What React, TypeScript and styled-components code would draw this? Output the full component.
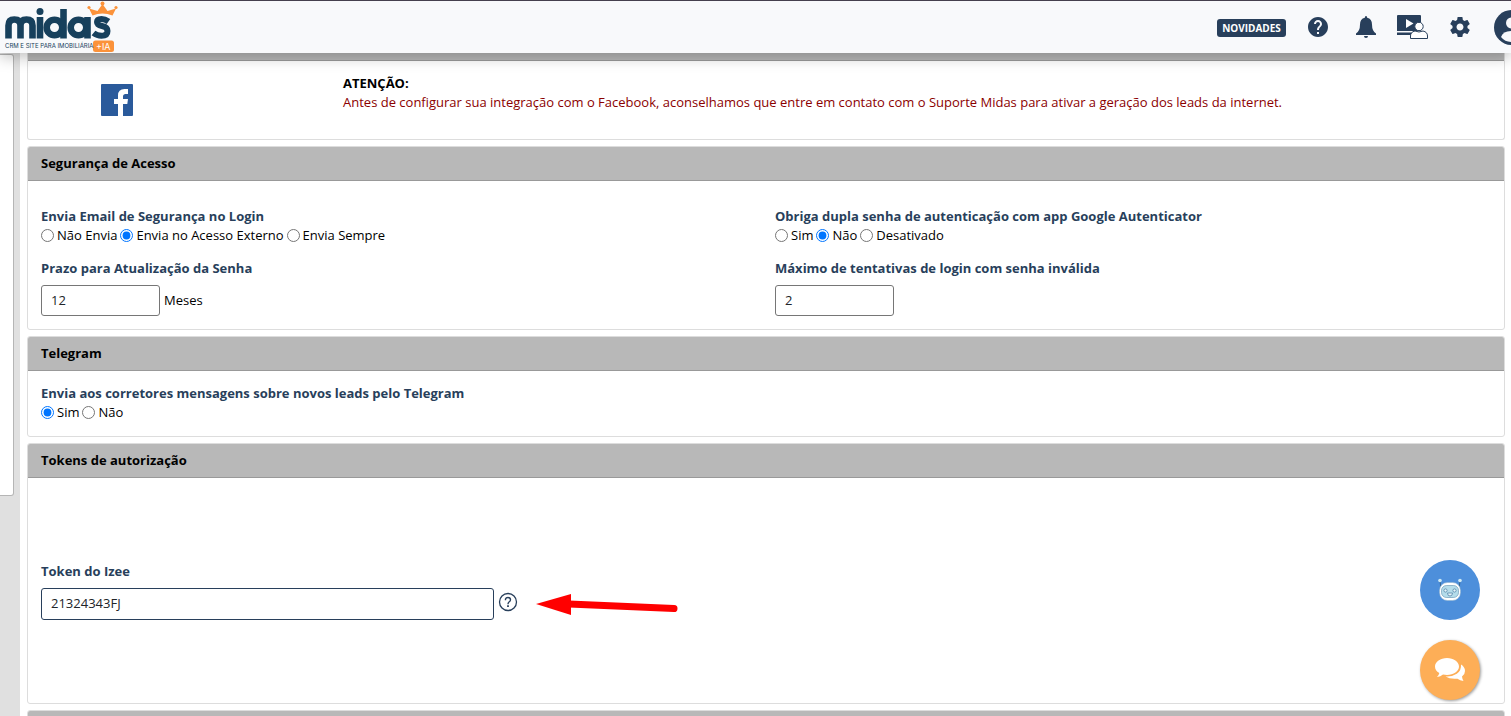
import React from "react";
import styled, { createGlobalStyle } from "styled-components";

const NAVY = "#283f5b";

const GlobalStyle = createGlobalStyle`
  *, *::before, *::after { box-sizing: border-box; }
  html, body { margin: 0; padding: 0; }
  body, input, button {
    font-family: "Open Sans", "Noto Sans", sans-serif;
    font-size: 13px;
    line-height: 20px;
    color: #000;
  }
`;

const Shell = styled.div`
  height: 100vh;
  display: flex;
  flex-direction: column;
  overflow: hidden;
  background: #fff;
`;

const TopBar = styled.header`
  position: relative;
  z-index: 2;
  flex: none;
  height: 53px;
  display: flex;
  align-items: center;
  justify-content: space-between;
  background: #f8f9fb;
  border-top: 1px solid #45404e;
  box-shadow: 0 4px 14px rgba(0, 0, 0, 0.25);
`;

const LogoLink = styled.a`
  display: block;
  align-self: flex-start;
  height: 52px;
`;

const Actions = styled.nav`
  display: flex;
  align-items: center;
  overflow: hidden;
  height: 52px;
`;

const NewsButton = styled.button`
  height: 18px;
  width: 69px;
  margin: 2px 22px 0 0;
  padding: 0;
  border: 0;
  border-radius: 3px;
  background: ${NAVY};
  color: #fff;
  font-size: 10px;
  line-height: 18px;
  font-weight: 700;
`;

const IconButton = styled.button<{ $width: number; $gap: number }>`
  flex: none;
  width: ${(p) => p.$width}px;
  height: 36px;
  margin-right: ${(p) => p.$gap}px;
  padding: 0;
  border: 0;
  background: none;
  display: flex;
  align-items: center;
  justify-content: flex-start;
  svg { display: block; flex: none; }
`;

const ProfileButton = styled(IconButton)`
  overflow: hidden;
`;

const Columns = styled.div`
  flex: 1;
  min-height: 0;
  display: flex;
`;

const Side = styled.aside`
  flex: none;
  width: 20px;
  padding-top: 1px;
  background: #e0e0e0;
`;

const SidePanel = styled.div`
  width: 14px;
  height: 442px;
  background: #fff;
  border: 1px solid #b5b5b5;
  border-left: 0;
  border-radius: 0 3px 3px 0;
`;

const Main = styled.main`
  flex: 1;
  min-width: 0;
  padding: 0 6px 0 7px;
  display: flex;
  flex-direction: column;
  gap: 6px;
  overflow: hidden;
`;

const Card = styled.section<{ $continued?: boolean }>`
  flex: none;
  border: 1px solid #ddd;
  border-top-width: ${(p) => (p.$continued ? 0 : 1)}px;
  border-radius: ${(p) => (p.$continued ? "0 0 3px 3px" : "3px")};
  overflow: hidden;
`;

const CardTitle = styled.h2`
  margin: 0;
  height: 34px;
  padding: 6px 13px;
  background: #b8b8b8;
  border-bottom: 1px solid #999;
  font-size: 13px;
  line-height: 20px;
  font-weight: 700;
`;

const TitleStrip = styled.div`
  height: 8px;
  background: #b8b8b8;
  border-bottom: 1px solid #999;
`;

const CardBody = styled.div<{ $top: number; $bottom: number }>`
  padding: ${(p) => p.$top}px 13px ${(p) => p.$bottom}px;
`;

const Notice = styled.div`
  display: flex;
  height: 78px;
  padding: 13px 13px 0;
`;

const NoticeLogo = styled.div`
  width: 302px;
  padding: 10px 60px;
  svg { display: block; }
`;

const NoticeText = styled.p`
  margin: 0;
  line-height: 19px;
  color: #8b0000;
  strong { display: block; color: #000; }
`;

const FieldGrid = styled.div`
  display: grid;
  grid-template-columns: 1fr 1fr;
  gap: 13px 18px;
`;

const RadioSet = styled.fieldset`
  margin: 0;
  padding: 0;
  border: 0;
  min-width: 0;
`;

const Legend = styled.legend`
  padding: 0;
  color: ${NAVY};
  font-weight: 700;
`;

const Options = styled.div`
  display: flex;
  gap: 3px;
  line-height: 19px;
`;

const Option = styled.label`
  display: flex;
  align-items: center;
  gap: 3px;
  input { width: 13px; height: 13px; margin: 0; }
`;

const FieldLabel = styled.label`
  display: block;
  margin-bottom: 7px;
  color: ${NAVY};
  font-weight: 700;
`;

const FieldRow = styled.div`
  display: flex;
  align-items: center;
  gap: 4px;
`;

const Unit = styled.span`
  line-height: 19px;
`;

const TextInput = styled.input<{ $wide?: boolean }>`
  flex: 0 1 ${(p) => (p.$wide ? 453 : 119)}px;
  min-width: 0;
  width: ${(p) => (p.$wide ? 453 : 119)}px;
  height: ${(p) => (p.$wide ? 32 : 31)}px;
  padding: 0 9px 2px;
  border: 1px solid ${(p) => (p.$wide ? NAVY : "#767676")};
  border-radius: 3px;
  background: #fff;
  color: #212529;
  outline: 0;
`;

const HelpButton = styled.button`
  flex: none;
  height: 24px;
  padding: 0 0 4px;
  border: 0;
  background: none;
  svg { display: block; }
`;

const Pointer = styled.svg`
  flex: none;
  margin-left: 14px;
`;

const Floating = styled.div`
  position: fixed;
  right: 31px;
  bottom: 16px;
  z-index: 3;
  display: grid;
  gap: 20px;
`;

const RoundButton = styled.button<{ $color: string; $raised?: boolean }>`
  width: 60px;
  height: 60px;
  padding: 0;
  border: 0;
  border-radius: 50%;
  background: ${(p) => p.$color};
  box-shadow: ${(p) => (p.$raised ? "1px 1px 3px rgba(0, 0, 0, 0.4)" : "none")};
  svg { display: block; margin: 0 auto; }
`;

const Logo = () => (
  <svg width="120" height="52" viewBox="0 1 120 52" role="img" aria-label="midas">
    <g fill="none" stroke="#17405c" strokeWidth="6.600">
      <path d="M8.500 38.500V25.500Q8.500 19.500 14.300 19.500Q20.500 19.500 20.500 25.500V38.500M20.500 25.500Q20.500 19.500 26.500 19.500Q32.500 19.500 32.500 25.500V38.500" />
      <path d="M40 17V38.500" />
      <circle cx="54.500" cy="27.500" r="7.800" />
      <path d="M63.500 9V38.500" />
      <circle cx="78.500" cy="27.500" r="7.800" />
      <path d="M87.500 17V38.500" />
      <path d="M108.500 21.500Q105 19 101.500 19Q97 19 97 22Q97 25 102 26Q107.500 27 107.500 31Q107.500 35.800 101.500 35.800Q97 35.800 93.500 33" strokeWidth="6" />
    </g>
    <circle cx="40" cy="11.500" r="3.500" fill="#17405c" />
    <path d="M92.500 15.500L89 8.500L97.500 11L102.500 4L107.500 11L116 8.500L112.500 15.500Q102.500 11.500 92.500 15.500Z" fill="#fb923a" />
    <g fill="#fb923a">
      <circle cx="89" cy="7.500" r="1.600" />
      <circle cx="102.500" cy="3.500" r="2" />
      <circle cx="116" cy="7.500" r="1.600" />
    </g>
    <rect x="93" y="40.500" width="21" height="11.500" rx="2.500" fill="#fb923a" />
    <text x="96" y="50" fontFamily="Inter, sans-serif" fontSize="9" fill="#fff">+IA</text>
    <text x="5" y="48" fontFamily="Inter, sans-serif" fontSize="6" fill="#17405c">CRM E SITE PARA IMOBILIÁRIA</text>
  </svg>
);

const FacebookLogo = () => (
  <svg width="32" height="32" viewBox="0 0 32 32" role="img" aria-label="Facebook">
    <rect width="32" height="32" rx="1" fill="#2a5a9b" />
    <path d="M17 32V20H13V15H17V11.500Q17 5 23.500 5H27V10H24.500Q22 10 22 12.500V15H27L26.300 20H22V32Z" fill="#fff" />
  </svg>
);

type RadioGroupProps = { name: string; legend: string; options: string[]; selected: string };

const RadioGroup = ({ name, legend, options, selected }: RadioGroupProps) => (
  <RadioSet>
    <Legend>{legend}</Legend>
    <Options>
      {options.map((o) => (
        <Option key={o}>
          <input type="radio" name={name} defaultChecked={o === selected} />
          {o}
        </Option>
      ))}
    </Options>
  </RadioSet>
);

export default function App() {
  return (
    <>
      <GlobalStyle />
      <Shell>
        <TopBar>
          <LogoLink href="#"><Logo /></LogoLink>
          <Actions>
            <NewsButton type="button">NOVIDADES</NewsButton>
            <IconButton type="button" aria-label="Ajuda" $width={20} $gap={28}>
              <svg width="20" height="20" viewBox="2 2 20 20" fill={NAVY}>
                <path d="M12 2C6.480 2 2 6.480 2 12s4.480 10 10 10 10-4.480 10-10S17.520 2 12 2zm1 17h-2v-2h2v2zm2.070-7.750l-.9.920C13.450 12.900 13 13.500 13 15h-2v-.5c0-1.100.450-2.100 1.170-2.830l1.240-1.260c.370-.360.590-.860.590-1.410 0-1.100-.9-2-2-2s-2 .9-2 2H8c0-2.210 1.790-4 4-4s4 1.790 4 4c0 .880-.360 1.680-.930 2.250z" />
              </svg>
            </IconButton>
            <IconButton type="button" aria-label="Notificações" $width={20} $gap={21}>
              <svg width="20" height="22" viewBox="0 0 20 22" fill={NAVY}>
                <path d="M10 0Q11.200 0 11.200 1.800Q16 3 16 8.500Q16 15 20 17.500V19H0V17.500Q4 15 4 8.500Q4 3 8.800 1.800Q8.800 0 10 0ZM8 20H12Q12 22 10 22Q8 22 8 20Z" />
              </svg>
            </IconButton>
            <IconButton type="button" aria-label="Treinamentos" $width={31} $gap={22}>
              <svg width="31" height="25" viewBox="0 0 31 25">
                <path d="M1 0H23Q24 0 24 1V16H0V1Q0 0 1 0ZM0 17.500H15V20H0Z" fill={NAVY} />
                <path d="M9 4L16.500 8.500L9 13Z" fill="#fff" />
                <g fill="#fff" stroke={NAVY}>
                  <circle cx="22" cy="11.500" r="4.200" />
                  <path d="M13.500 23.500V21Q13.500 17 18 16Q22 18 26 16Q30.500 17 30.500 21V23.500Z" />
                </g>
              </svg>
            </IconButton>
            <IconButton type="button" aria-label="Configurações" $width={20} $gap={24}>
              <svg width="20" height="20" viewBox="2 2 20 20" fill={NAVY}>
                <path d="M19.430 12.980c.040-.320.070-.640.070-.980s-.030-.660-.070-.980l2.110-1.650c.190-.150.240-.420.120-.640l-2-3.460c-.120-.220-.390-.3-.610-.220l-2.490 1c-.520-.4-1.080-.730-1.690-.980l-.380-2.650C14.460 2.180 14.250 2 14 2h-4c-.250 0-.460.180-.490.420l-.380 2.650c-.610.250-1.170.590-1.690.980l-2.490-1c-.230-.090-.490 0-.610.220l-2 3.460c-.130.220-.070.490.120.640l2.110 1.650c-.040.320-.070.650-.070.980s.030.660.070.980l-2.110 1.650c-.190.150-.240.420-.120.640l2 3.460c.120.220.390.3.610.220l2.490-1c.520.4 1.080.730 1.690.980l.380 2.650c.030.240.240.420.490.420h4c.250 0 .460-.180.490-.420l.380-2.650c.610-.250 1.170-.590 1.690-.980l2.490 1c.230.090.490 0 .610-.220l2-3.460c.120-.220.070-.490-.120-.640l-2.110-1.650zM12 15.500c-1.930 0-3.500-1.570-3.500-3.500s1.570-3.500 3.500-3.500 3.500 1.570 3.500 3.500-1.570 3.500-3.500 3.500z" />
              </svg>
            </IconButton>
            <ProfileButton type="button" aria-label="Perfil" $width={17} $gap={0}>
              <svg width="35" height="35" viewBox="0 0 35 35">
                <circle cx="17.500" cy="17.500" r="17.500" fill={NAVY} />
                <circle cx="17.500" cy="13" r="5.500" fill="#f8f9fb" />
                <path d="M7 27Q9 21 17.500 21Q26 21 28 27Q24 32 17.500 32Q11 32 7 27Z" fill="#f8f9fb" />
              </svg>
            </ProfileButton>
          </Actions>
        </TopBar>

        <Columns>
          <Side><SidePanel /></Side>
          <Main>
            <Card $continued>
              <TitleStrip />
              <Notice>
                <NoticeLogo><FacebookLogo /></NoticeLogo>
                <NoticeText>
                  <strong>ATENÇÃO:</strong>
                  Antes de configurar sua integração com o Facebook, aconselhamos que entre em contato com o Suporte Midas para ativar a geração dos leads da internet.
                </NoticeText>
              </Notice>
            </Card>

            <Card>
              <CardTitle>Segurança de Acesso</CardTitle>
              <CardBody $top={25} $bottom={13}>
                <FieldGrid>
                  <RadioGroup
                    name="email"
                    legend="Envia Email de Segurança no Login"
                    options={["Não Envia", "Envia no Acesso Externo", "Envia Sempre"]}
                    selected="Envia no Acesso Externo"
                  />
                  <RadioGroup
                    name="dupla"
                    legend="Obriga dupla senha de autenticação com app Google Autenticator"
                    options={["Sim", "Não", "Desativado"]}
                    selected="Não"
                  />
                  <div>
                    <FieldLabel htmlFor="prazo">Prazo para Atualização da Senha</FieldLabel>
                    <FieldRow>
                      <TextInput id="prazo" defaultValue="12" />
                      <Unit>Meses</Unit>
                    </FieldRow>
                  </div>
                  <div>
                    <FieldLabel htmlFor="maximo">Máximo de tentativas de login com senha inválida</FieldLabel>
                    <FieldRow>
                      <TextInput id="maximo" defaultValue="2" />
                    </FieldRow>
                  </div>
                </FieldGrid>
              </CardBody>
            </Card>

            <Card>
              <CardTitle>Telegram</CardTitle>
              <CardBody $top={12} $bottom={14}>
                <RadioGroup
                  name="telegram"
                  legend="Envia aos corretores mensagens sobre novos leads pelo Telegram"
                  options={["Sim", "Não"]}
                  selected="Sim"
                />
              </CardBody>
            </Card>

            <Card>
              <CardTitle>Tokens de autorização</CardTitle>
              <CardBody $top={83} $bottom={83}>
                <FieldLabel htmlFor="token">Token do Izee</FieldLabel>
                <FieldRow>
                  <TextInput id="token" $wide defaultValue="21324343FJ" />
                  <HelpButton type="button" aria-label="Ajuda sobre o token">
                    <svg width="20" height="20" viewBox="0 0 20 20" fill="none" stroke={NAVY}>
                      <circle cx="10" cy="10" r="8.500" strokeWidth="1.300" />
                      <path d="M7.500 8.200V7Q8 5.500 10 5.500Q12.500 5.500 12.500 7.700Q12.500 9 11 10Q10 10.700 10 12.200" strokeWidth="1.400" />
                      <path d="M10 13.300V15" strokeWidth="1.800" />
                    </svg>
                  </HelpButton>
                  <Pointer width="142" height="22" viewBox="0 0 142 22" aria-hidden="true">
                    <path d="M33 11L138 15.500" stroke="#f00" strokeWidth="7" strokeLinecap="round" />
                    <path d="M0 11L35 1V22Z" fill="#f00" />
                  </Pointer>
                </FieldRow>
              </CardBody>
            </Card>

            <Card>
              <TitleStrip />
            </Card>
          </Main>
        </Columns>

        <Floating>
          <RoundButton type="button" aria-label="Assistente virtual" $color="#4d8fdb">
            <svg width="26" height="24" viewBox="0 0 26 24">
              <path d="M3 3L4 11M23 3L22 11" stroke="#37648f" strokeWidth="1" />
              <circle cx="3" cy="2.500" r="1.800" fill="#cfeaf5" />
              <circle cx="23" cy="2.500" r="1.800" fill="#cfeaf5" />
              <rect x="2.500" y="4.500" width="21" height="18" rx="8" fill="#fff" stroke="#8fb4d0" strokeWidth="0.600" />
              <rect x="4.500" y="7.500" width="17" height="12" rx="5" fill="#b4dcea" stroke="#5d8fae" strokeWidth="0.600" />
              <g fill="none" stroke="#5585a8" strokeWidth="0.800">
                <circle cx="8.500" cy="12.500" r="1.600" fill="#e8f6fb" />
                <circle cx="17.500" cy="12.500" r="1.600" fill="#e8f6fb" />
                <path d="M10.500 15H15.500Q15.500 18 13 18Q10.500 18 10.500 15Z" fill="#e8f6fb" />
              </g>
            </svg>
          </RoundButton>
          <RoundButton type="button" aria-label="Conversas" $color="#fdae57" $raised>
            <svg width="30" height="24" viewBox="0 0 30 24" fill="#fff">
              <path d="M12 0C18.500 0 24 3.700 24 8.500S18.500 17 12 17Q10 17 8 16.600Q5.500 18.700 2 19Q4 17 4.300 15Q0 12.500 0 8.500C0 3.700 5.500 0 12 0Z" />
              <path d="M26 6.500Q30 9 30 13Q30 16.500 27 18.600Q27.200 21 28.500 23Q25 22.500 22.500 20.700Q15 21.500 10.500 18.500Q17 19 21.800 15.800Q26.500 12.500 26 6.500Z" />
            </svg>
          </RoundButton>
        </Floating>
      </Shell>
    </>
  );
}
